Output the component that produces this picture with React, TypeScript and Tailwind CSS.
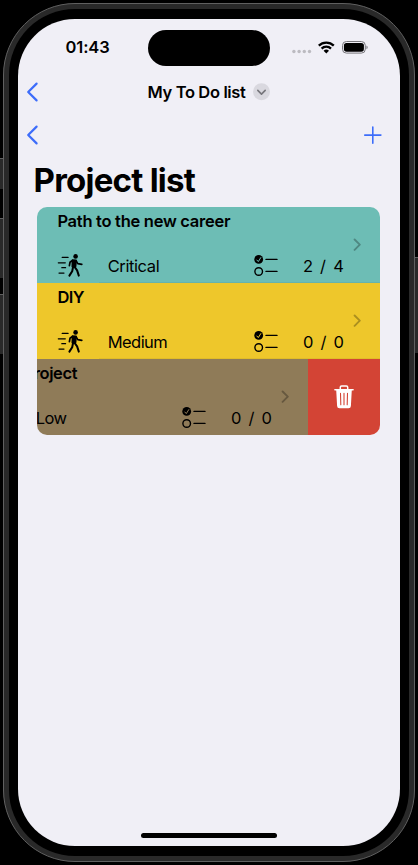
import type { ReactNode } from "react";

function BackChevron() {
  return (
    <svg width="13" height="20" viewBox="0 0 13 20" fill="none" stroke="#3d6dfa" strokeWidth="2.2" strokeLinecap="round" strokeLinejoin="round">
      <path d="M10.6 1.6 2.2 10l8.4 8.4" />
    </svg>
  );
}

function Runner() {
  return (
    <svg width="26" height="24" viewBox="0 0 26 24" fill="none" stroke="#000" strokeLinecap="round" strokeLinejoin="round">
      <path strokeWidth="1.2" d="M5.2 3.4h5.9M1.3 8.8h7M4.8 13.7h3.8M2 19.1h5" />
      <circle cx="18.6" cy="2.4" r="2.3" fill="#000" stroke="none" />
      <path d="M15.6 6.2 19 6.4 18.5 12.3 15.4 12.7z" fill="#000" strokeWidth="1.8" />
      <path strokeWidth="1.7" d="M15.4 6.5 13 8.3 12.4 11.7M19.2 7 20.8 9.6l4 .8" />
      <path strokeWidth="2" d="M16 13.2 15.2 17.2 12.4 21.6M17.4 12.7 20.1 16.4 21.8 21.6" />
    </svg>
  );
}

function Checklist() {
  return (
    <svg width="25" height="22" viewBox="0 0 25 22" fill="none" stroke="#000" strokeLinecap="round" strokeLinejoin="round">
      <circle cx="4.7" cy="4.4" r="4.4" fill="#000" stroke="none" />
      <circle cx="4.7" cy="16.5" r="3.8" strokeWidth="1.4" />
      <path strokeWidth="1.4" d="M12 4.4h11M12 16.4h11" />
      <path stroke="currentColor" strokeWidth="1" d="m2.8 5 1.5 1.6 2.5-4" />
    </svg>
  );
}

function Trash() {
  return (
    <svg width="20" height="24" viewBox="0 0 20 24" fill="none" stroke="#fff" strokeLinecap="round" strokeLinejoin="round">
      <path strokeWidth="1.5" d="M.9 4.8h18.2M6.3 4.4V2.3q0-1.3 1.3-1.3h4.8q1.3 0 1.3 1.3v2.1" />
      <path fill="#fff" stroke="none" d="M2.2 5h15.6l-.9 16q-.1 2.3-2.4 2.3H5.5q-2.3 0-2.4-2.3z" />
      <path stroke="#d34435" strokeWidth="1.1" d="m6.5 8.4.3 11.4M10 8.4v11.4M13.5 8.4l-.3 11.4" />
    </svg>
  );
}

type RowProps = {
  title: string;
  priority: string;
  done: number;
  total: number;
  tone: string;
  titleTracking: string;
  priorityTracking: string;
  divider?: boolean;
};

function ProjectRow({ title, priority, done, total, tone, titleTracking, priorityTracking, divider }: RowProps) {
  return (
    <div className={`flex h-[76px] w-[343px] shrink-0 pl-5 ${tone}`}>
      <div className="flex w-[288px] flex-col">
        <div className={`mt-[3px] h-[22px] text-[16.5px]/[22px] font-semibold whitespace-nowrap text-black ${titleTracking}`}>{title}</div>
        <div className="mt-[21px] flex h-[26px] items-center">
          <Runner />
          <div className={`ml-[24.3px] w-[146.2px] text-[16.5px]/[22px] text-black ${priorityTracking}`}>{priority}</div>
          <Checklist />
          <div className="ml-[24px] flex w-[41px] justify-between text-[16.5px]/[22px] text-black">
            <span>{done}</span>
            <span>/</span>
            <span>{total}</span>
          </div>
        </div>
        {divider && <div className="mt-auto ml-[42px] h-px w-[281px] bg-black/5" />}
      </div>
      <svg className="mt-[31px] ml-[8px]" width="8" height="13" viewBox="0 0 8 13" fill="none" stroke="#000" strokeOpacity=".28" strokeWidth="1.9" strokeLinecap="round" strokeLinejoin="round">
        <path d="m1.6 1.5 5.2 5.2-5.2 5.2" />
      </svg>
    </div>
  );
}

function StatusBar() {
  return (
    <div className="flex h-[56px] items-start">
      <div className="mt-[17px] ml-[47.5px] w-[82.5px] text-[16.5px]/[22px] font-semibold tracking-[-0.1px]">01:43</div>
      <div className="mt-[11px] h-[36px] w-[122px] rounded-full bg-black" />
      <div className="mt-[22px] ml-[22px] flex h-[14px] items-center">
        <svg width="20" height="14" viewBox="0 0 20 14" fill="#bcbbc1">
          <circle cx="1.9" cy="10.5" r="1.7" />
          <circle cx="7.1" cy="10.5" r="1.7" />
          <circle cx="12.3" cy="10.5" r="1.7" />
          <circle cx="17.5" cy="10.5" r="1.7" />
        </svg>
        <svg className="ml-[6px]" width="17" height="14" viewBox="0 0 17 14" fill="none" stroke="#000">
          <path strokeWidth="2.3" d="M.8 4.6a10.7 10.7 0 0 1 15 0M3.6 7.6a6.7 6.7 0 0 1 9.4 0" />
          <path fill="#000" stroke="none" d="M5.6 9.7a3.9 3.9 0 0 1 5.4 0L8.3 12.5z" />
        </svg>
        <svg className="ml-[7px]" width="27" height="14" viewBox="0 0 27 14" fill="none">
          <rect x=".5" y=".5" width="22.8" height="11.6" rx="3.9" stroke="#77767b" />
          <rect x="1.9" y="1.9" width="20" height="8.8" rx="2.6" fill="#000" />
          <path fill="#85848a" d="M24.4 4.4c1.8.6 1.8 3.3 0 3.9z" />
        </svg>
      </div>
    </div>
  );
}

function Handset({ children }: { children: ReactNode }) {
  return (
    <div className="flex h-[865px] w-[418px] overflow-hidden bg-black font-['Inter','Liberation_Sans',sans-serif] text-black">
      <div className="flex w-[3px] shrink-0 flex-col">
        <div className="mt-[158px] h-[31px] border-t border-[#606060] bg-[#292929]" />
        <div className="mt-[29px] h-[60px] border-t border-[#606060] bg-[#292929]" />
        <div className="mt-[16px] h-[60px] border-t border-[#606060] bg-[#292929]" />
      </div>
      <div className="mt-[3px] h-[859px] w-[412px] shrink-0 rounded-[72px] border border-[#606060] bg-[#292929] p-[5px]">
        <div className="h-full rounded-[66px] bg-black px-[9px] py-[10px]">
          <div className="flex h-[827px] w-[382px] flex-col overflow-hidden rounded-[57px] bg-[#f0eff6]">{children}</div>
        </div>
      </div>
      <div className="w-[3px] shrink-0">
        <div className="mt-[257px] h-[96px] border-t border-[#606060] bg-[#292929]" />
      </div>
    </div>
  );
}

export default function App() {
  return (
    <Handset>
      <StatusBar />
      <div className="flex h-[34px] items-center pl-[8px]">
        <BackChevron />
        <div className="ml-[108.5px] w-[105.5px] text-[16.5px]/[22px] font-semibold tracking-[-0.36px] whitespace-nowrap">My To Do list</div>
        <svg width="17" height="18" viewBox="0 0 17 18" fill="none">
          <circle cx="8.5" cy="8.8" r="8.5" fill="#d9d8df" />
          <path d="m4.8 7.4 3.7 3.7 3.7-3.7" stroke="#77767c" strokeWidth="1.6" strokeLinecap="round" strokeLinejoin="round" />
        </svg>
      </div>
      <div className="mt-[8px] flex h-[36px] items-center justify-between pr-[18px] pl-[8px]">
        <BackChevron />
        <svg width="18" height="18" viewBox="0 0 18 18" stroke="#3d6dfa" strokeWidth="1.6" strokeLinecap="round">
          <path d="M8.8 1v16.2M.7 9.1h16.2" />
        </svg>
      </div>
      <h1 className="mt-[7px] h-[41px] pl-[15.5px] text-[33px]/[41px] font-bold tracking-[-0.75px]">Project list</h1>
      <div className="mt-[6px] ml-[19.4px] w-[343px] overflow-hidden rounded-[10px]">
        <ProjectRow title="Path to the new career" priority="Critical" done={2} total={4} tone="bg-[#6dbdb5] text-[#6dbdb5]" titleTracking="tracking-[-0.28px]" priorityTracking="tracking-[-0.4px]" divider />
        <ProjectRow title="DIY" priority="Medium" done={0} total={0} tone="bg-[#eec72b] text-[#eec72b]" titleTracking="tracking-[-0.5px]" priorityTracking="tracking-[-0.55px]" divider />
        <div className="flex justify-end">
          <ProjectRow title="New project" priority="Low" done={0} total={0} tone="bg-[#8f7b58] text-[#8f7b58]" titleTracking="tracking-[-0.4px]" priorityTracking="tracking-[-0.6px]" />
          <div className="flex h-[76px] w-[72px] shrink-0 items-center justify-center bg-[#d34435]">
            <Trash />
          </div>
        </div>
      </div>
      <div className="mt-auto mb-[8px] h-[5px] w-[136px] self-center rounded-full bg-black" />
    </Handset>
  );
}
